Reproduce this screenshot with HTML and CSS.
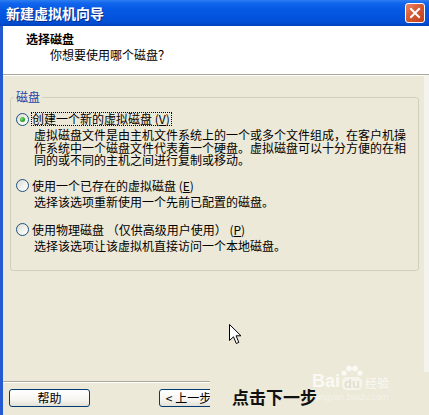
FILE: index.html
```html
<!DOCTYPE html>
<html lang="zh-CN">
<head>
<meta charset="utf-8">
<title>新建虚拟机向导</title>
<link rel="stylesheet" href="styles.css">
</head>
<body>
<div class="window">
  <div class="titlebar">
    <span class="title">新建虚拟机向导</span>
    <span class="close">
      <svg width="18" height="18" viewBox="0 0 18 18"><path d="M5 5 L13 13 M13 5 L5 13" stroke="#fff" stroke-width="2" stroke-linecap="square"/></svg>
    </span>
  </div>
  <div class="body">
    <div class="header">
      <div class="h-title">选择磁盘</div>
      <div class="h-sub">你想要使用哪个磁盘？</div>
    </div>
    <div class="content">
      <fieldset class="group">
        <legend>磁盘</legend>
        <div class="option first">
          <div class="option-row"><span class="radio checked"></span><span class="label focus">创建一个新的虚拟磁盘 (<u>V</u>)</span></div>
          <div class="desc multi">
            <div>虚拟磁盘文件是由主机文件系统上的一个或多个文件组成，在客户机操</div>
            <div>作系统中一个磁盘文件代表着一个硬盘。虚拟磁盘可以十分方便的在相</div>
            <div>同的或不同的主机之间进行复制或移动。</div>
          </div>
        </div>
        <div class="option">
          <div class="option-row"><span class="radio"></span><span class="label">使用一个已存在的虚拟磁盘 (<u>E</u>)</span></div>
          <div class="desc">选择该选项重新使用一个先前已配置的磁盘。</div>
        </div>
        <div class="option">
          <div class="option-row"><span class="radio"></span><span class="label">使用物理磁盘 （仅供高级用户使用） (<u>P</u>)</span></div>
          <div class="desc">选择该选项让该虚拟机直接访问一个本地磁盘。</div>
        </div>
      </fieldset>
    </div>
    <div class="footer">
      <div class="footer-inner">
        <span class="btn help">帮助</span>
        <span class="btn back">&lt; 上一步(<u>B</u>)</span>
      </div>
    </div>
  </div>

  <div class="note">点击下一步</div>

  <div class="watermark">
    <span class="wm-bai">Bai</span>
    <span class="wm-du">
      <svg class="paw" width="22" height="12" viewBox="0 0 22 12"><circle cx="3" cy="8" r="2.6"/><circle cx="8" cy="3.5" r="2.8"/><circle cx="14" cy="3.5" r="2.8"/><circle cx="19" cy="8" r="2.6"/></svg>
      <span class="du">du</span>
    </span>
    <span class="wm-jy">经验</span>
    <span class="wm-url">jingyan.baidu.com</span>
  </div>

  <svg class="cursor" width="14" height="22" viewBox="0 0 14 22"><path d="M0.5 0.5 L0.5 16.5 L4.5 12.8 L7.3 19.5 L9.8 18.4 L7.1 11.8 L12 11.8 Z" fill="#fff" stroke="#000" stroke-width="1" stroke-linejoin="miter"/></svg>
</div>
</body>
</html>
```

FILE: styles.css
```css
html, body {
  margin: 0;
  padding: 0;
}
body {
  width: 429px;
  height: 415px;
  overflow: hidden;
  background: #ECE9D8;
  font-family: "Noto Sans CJK SC", "Noto Sans", sans-serif;
  font-size: 12px;
  color: #000;
}
.window {
  position: relative;
  width: 429px;
  height: 415px;
  display: flex;
  flex-direction: column;
}
.titlebar {
  height: 26px;
  flex: none;
  box-sizing: border-box;
  display: flex;
  align-items: center;
  justify-content: space-between;
  padding: 0 4px 0 6px;
  background: linear-gradient(#2E7DF0 0%, #1266EC 12%, #0659E4 35%, #0453DE 65%, #0250D6 85%, #0041BE 100%);
}
.title {
  color: #fff;
  font-weight: bold;
  font-size: 14px;
  line-height: 16px;
  text-shadow: 1px 1px 0 #0B2A8A;
}
.close {
  width: 20px;
  height: 20px;
  box-sizing: border-box;
  border: 1px solid #fff;
  border-radius: 3px;
  background: linear-gradient(135deg, #E9866A 0%, #D65A34 45%, #C0401A 100%);
  display: flex;
  align-items: center;
  justify-content: center;
}
.body {
  flex: 1;
  display: flex;
  flex-direction: column;
  border-left: 3px solid #2459D0;
  min-height: 0;
}
.header {
  height: 49px;
  flex: none;
  box-sizing: border-box;
  background: #fff;
  border-bottom: 1px solid #ACA899;
  padding: 6px 0 0 23px;
}
.h-title {
  font-weight: bold;
  line-height: 14px;
}
.h-sub {
  margin: 2px 0 0 24px;
  line-height: 14px;
}
.content {
  flex: 1;
  border-top: 1px solid #fff;
  border-right: 5px solid #F4F3EE;
  padding: 15px 5px 0 7px;
}
.group {
  margin: 0;
  border: 1px solid #D0D0BF;
  border-radius: 3px;
  padding: 9px 5px 18px 5px;
}
.group legend {
  padding: 0 2px;
  margin-left: -2px;
  line-height: 12px;
  color: #1B45A8;
}
.option + .option {
  margin-top: 15px;
}
.option.first + .option {
  margin-top: 12px;
}
.option-row {
  display: flex;
  align-items: center;
  height: 14px;
}
.radio {
  position: relative;
  flex: none;
  width: 13px;
  height: 13px;
  box-sizing: border-box;
  border: 1px solid #1C5180;
  border-radius: 50%;
  background: linear-gradient(135deg, #DCDCD4 0%, #F2F2EE 55%, #fff 100%);
  margin-right: 2px;
}
.radio.checked::after {
  content: "";
  position: absolute;
  left: 3px;
  top: 3px;
  width: 5px;
  height: 5px;
  border-radius: 50%;
  background: radial-gradient(circle at 35% 35%, #8BE08B 0%, #2DAA2D 50%, #168716 100%);
}
.label {
  line-height: 12px;
  border: 1px dotted transparent;
  padding-right: 1px;
  white-space: nowrap;
}
.label.focus {
  border-color: #000;
}
.desc {
  margin: 3px 0 0 18px;
  line-height: 12px;
  white-space: nowrap;
}
.desc.multi {
  line-height: 12.5px;
}
.footer {
  height: 34px;
  flex: none;
  box-sizing: border-box;
  border-top: 1px solid #ACA899;
}
.footer-inner {
  border-top: 1px solid #fff;
  padding: 6px 0 0 6px;
  display: flex;
}
.btn {
  height: 18px;
  box-sizing: border-box;
  border: 1px solid #003C74;
  border-radius: 3px;
  background: linear-gradient(#FFFFFF 0%, #F6F5F0 60%, #E3E0D6 100%);
  line-height: 16px;
  text-align: center;
  white-space: nowrap;
}
.help {
  width: 81px;
}
.back {
  width: 75px;
  margin-left: 69px;
}
.note {
  position: absolute;
  left: 210px;
  top: 372px;
  width: 219px;
  height: 43px;
  box-sizing: border-box;
  background: #ECE9D8;
  padding: 15px 0 0 22px;
  font-weight: bold;
  font-size: 17px;
  line-height: 20px;
  color: #111;
}
.watermark {
  position: absolute;
  left: 312px;
  top: 362px;
  width: 92px;
  height: 40px;
  color: rgba(255, 255, 255, 0.75);
  font-family: "Liberation Sans", Arial, sans-serif;
  display: flex;
  flex-wrap: wrap;
  align-items: flex-end;
}
.wm-bai {
  font-size: 18px;
  line-height: 18px;
  font-weight: bold;
  margin-top: 8px;
}
.wm-du {
  display: flex;
  flex-direction: column;
  align-items: center;
  margin-left: 1px;
}
.paw {
  fill: rgba(255, 255, 255, 0.75);
}
.du {
  font-size: 13px;
  font-weight: bold;
  line-height: 13px;
  padding: 0 2px;
  border-radius: 5px;
  background: rgba(255, 255, 255, 0.55);
  color: #E4E0CE;
}
.wm-jy {
  font-family: "Noto Sans CJK SC", sans-serif;
  font-size: 12px;
  line-height: 14px;
  margin-left: 2px;
}
.wm-url {
  width: 100%;
  font-size: 9px;
  line-height: 10px;
  color: rgba(255, 255, 255, 0.45);
  padding-left: 4px;
}
.cursor {
  position: absolute;
  left: 229px;
  top: 324px;
}
```
